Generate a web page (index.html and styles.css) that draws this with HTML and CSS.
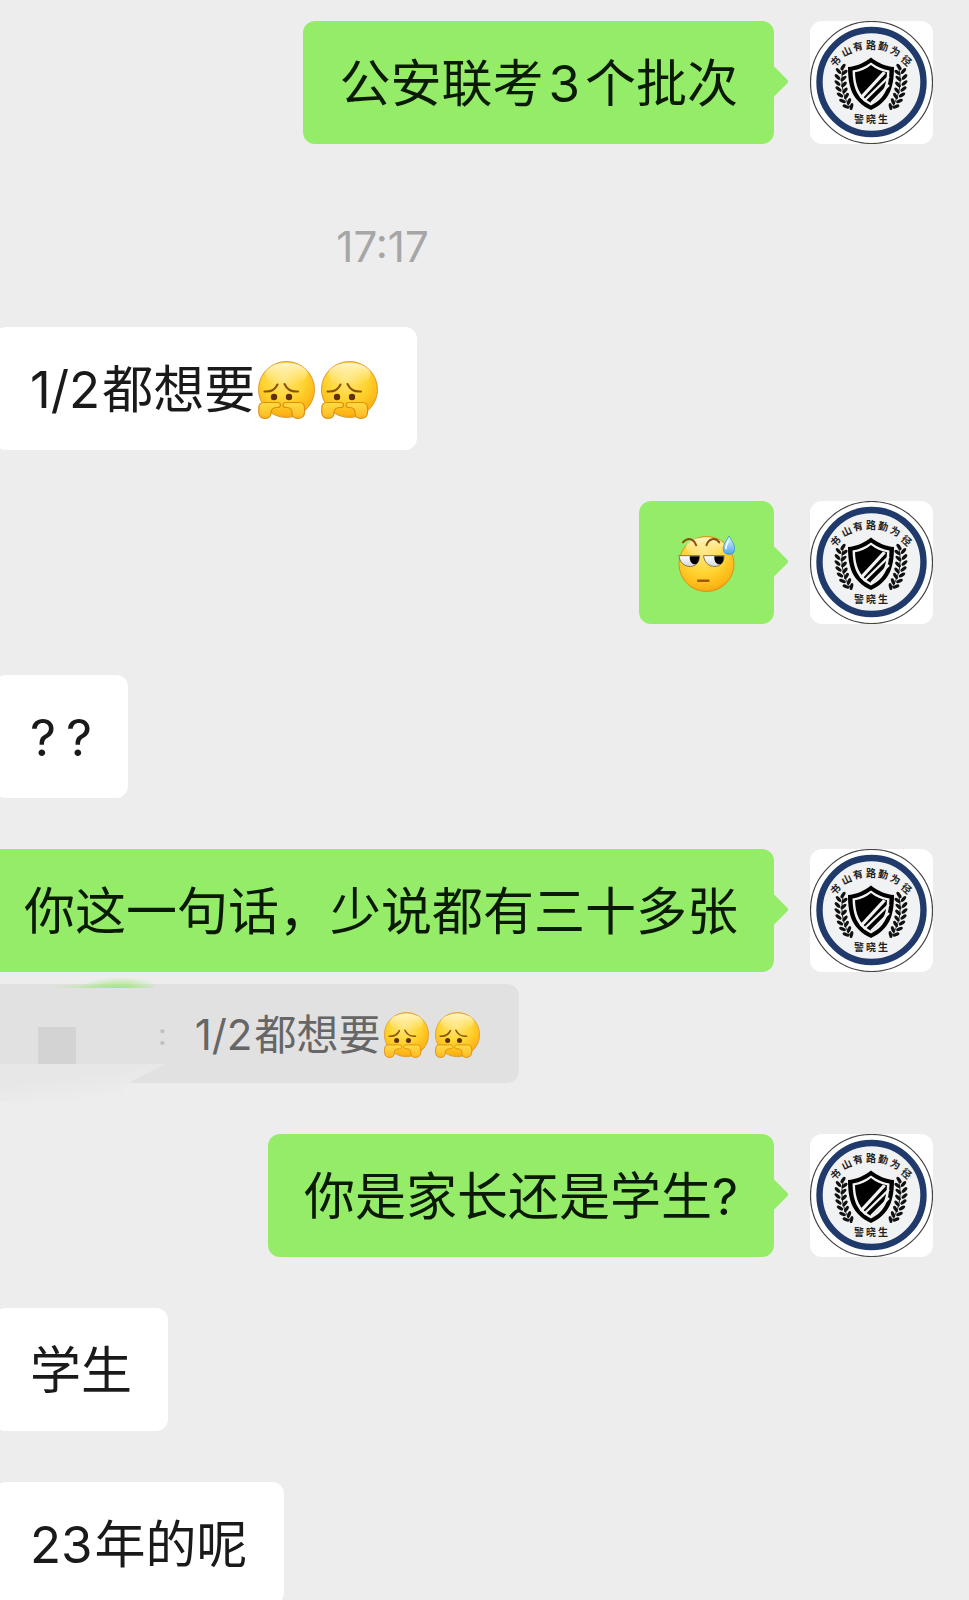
FILE: index.html
```html
<!DOCTYPE html>
<html lang="zh-CN">
<head>
<meta charset="utf-8">
<meta name="viewport" content="width=device-width, initial-scale=1">
<title>聊天</title>
<link rel="stylesheet" href="styles.css">
</head>
<body>
<svg class="defs" aria-hidden="true">
  <defs>
    <radialGradient id="skin" cx="0.45" cy="0.3" r="0.75">
      <stop offset="0" stop-color="#ffe680"/>
      <stop offset="0.5" stop-color="#ffd430"/>
      <stop offset="0.85" stop-color="#fdb515"/>
      <stop offset="1" stop-color="#ee9410"/>
    </radialGradient>
    <linearGradient id="shine" x1="0" y1="0" x2="0" y2="1">
      <stop offset="0" stop-color="#fff8d8" stop-opacity="0.9"/>
      <stop offset="1" stop-color="#fff0a0" stop-opacity="0"/>
    </linearGradient>
    <linearGradient id="hand" x1="0" y1="0" x2="0" y2="1">
      <stop offset="0" stop-color="#ffdc45"/>
      <stop offset="1" stop-color="#fdb922"/>
    </linearGradient>
    <linearGradient id="drop" x1="0" y1="0" x2="0" y2="1">
      <stop offset="0" stop-color="#e4f6ff"/>
      <stop offset="1" stop-color="#4ba6ea"/>
    </linearGradient>
    <linearGradient id="eye" x1="0" y1="0" x2="0" y2="1">
      <stop offset="0" stop-color="#ffffff"/>
      <stop offset="1" stop-color="#d4d8dc"/>
    </linearGradient>

    <symbol id="sad" viewBox="0 0 57 58">
      <circle cx="28.5" cy="28.5" r="28" fill="url(#skin)" stroke="#dc9a2c" stroke-width="1"/>
      <ellipse cx="28.5" cy="13" rx="21" ry="11" fill="url(#shine)"/>
      <g fill="none" stroke="#8a5208" stroke-width="2" stroke-linecap="round">
        <path d="M6.500 30.500C12 31 17 29 19.500 23.500"/>
        <path d="M26.500 23C29 28.500 34 31 40 30.500"/>
      </g>
      <circle cx="16" cy="36" r="3.200" fill="#5f3009"/>
      <circle cx="31" cy="36" r="3.200" fill="#5f3009"/>
      <g fill="url(#hand)" stroke="#dd8f13" stroke-width="1.200" stroke-linejoin="round">
        <path d="M6 41.500H19.500C23.500 41.500 23.500 46.500 19.500 46.500C15 46.500 13 48 13 51.500C13 55.500 11 57.400 7.500 57.400C3.500 57.400 .8 55.500 .8 51.500V47C.8 43 2.500 41.500 6 41.500Z"/>
        <path d="M41 41.500H28C24 41.500 24 46.500 28 46.500C32.500 46.500 34 48 34 51.500C34 55.500 36.500 57.400 39.500 57.400C43.500 57.400 46.500 55.500 46.500 51.500V47C46.500 43 44.500 41.500 41 41.500Z"/>
      </g>
    </symbol>

    <symbol id="sweat" viewBox="0 0 58 58">
      <circle cx="29" cy="29" r="28" fill="url(#skin)" stroke="#d99018" stroke-width="1"/>
      <ellipse cx="28" cy="12" rx="20" ry="10" fill="url(#shine)"/>
      <g fill="none" stroke="#8a4f0a" stroke-width="2" stroke-linecap="round">
        <path d="M5 7C10 1.500 16 3 18.500 10"/>
        <path d="M29 10C31 3 38 1.500 42 7"/>
      </g>
      <path d="M1 20.500H22C22 27 18 31.500 12.500 31.500C6 31.500 1.500 27 1 20.500Z" fill="url(#eye)" stroke="#8b7040" stroke-width="1"/>
      <path d="M26 20.500H47C47 27 43 31.500 37.500 31.500C31 31.500 26.500 27 26 20.500Z" fill="url(#eye)" stroke="#8b7040" stroke-width="1"/>
      <path d="M12 21H21.500C21.500 26 20 29.300 17 29.300C14 29.300 11.500 26 12 21Z"/>
      <path d="M37 21H46.500C46.500 26 45 29.300 42 29.300C39 29.300 36.500 26 37 21Z"/>
      <path d="M20.500 46H31" stroke="#9a5a0a" stroke-width="2.400" stroke-linecap="round"/>
      <path d="M52 .5C49.500 5 46 9 46 13.500C46 17 48.500 19.300 52 19.300C55.500 19.300 57.700 17 57.700 13.500C57.700 9 54.500 5 52 .5Z" fill="url(#drop)" stroke="#3d93cf" stroke-width=".8"/>
      <path d="M51 6C49.500 9 48.500 11 48.800 13.500" fill="none" stroke="#fff" stroke-width="1.600" stroke-linecap="round"/>
    </symbol>

    <symbol id="laurel" viewBox="0 0 20 50" overflow="visible">
      <path d="M7 3C4 18 7 32 16 44" fill="none" stroke="#222" stroke-width="1"/>
      <g fill="#111">
        <ellipse rx="3.600" ry="1.700" transform="translate(7 1) rotate(-55)"/>
        <ellipse rx="3.600" ry="1.700" transform="translate(2.500 5) rotate(50)"/>
        <ellipse rx="3.600" ry="1.700" transform="translate(8.500 6.500) rotate(-40)"/>
        <ellipse rx="3.600" ry="1.700" transform="translate(1.500 11) rotate(46)"/>
        <ellipse rx="3.600" ry="1.700" transform="translate(7.500 12.500) rotate(-42)"/>
        <ellipse rx="3.600" ry="1.700" transform="translate(1.500 17) rotate(42)"/>
        <ellipse rx="3.600" ry="1.700" transform="translate(8 18.500) rotate(-46)"/>
        <ellipse rx="3.600" ry="1.700" transform="translate(2.500 23) rotate(38)"/>
        <ellipse rx="3.600" ry="1.700" transform="translate(9 24.500) rotate(-52)"/>
        <ellipse rx="3.600" ry="1.700" transform="translate(4 29) rotate(32)"/>
        <ellipse rx="3.600" ry="1.700" transform="translate(10.500 30) rotate(-60)"/>
        <ellipse rx="3.600" ry="1.700" transform="translate(6.500 35) rotate(26)"/>
        <ellipse rx="3.600" ry="1.700" transform="translate(13 35.500) rotate(-68)"/>
        <ellipse rx="3.600" ry="1.700" transform="translate(10 40.500) rotate(20)"/>
        <ellipse rx="3.600" ry="1.700" transform="translate(15.500 40.500) rotate(-78)"/>
      </g>
    </symbol>

    <symbol id="badge" viewBox="0 0 123 123">
      <rect width="123" height="123" fill="#fff"/>
      <circle cx="61.500" cy="61.500" r="61" fill="#fff" stroke="#444" stroke-width="1.200"/>
      <circle cx="61.500" cy="61" r="52" fill="#f1f2f3" stroke="#1f3a6b" stroke-width="6.400"/>
      <g class="badge-text" text-anchor="middle">
        <text transform="translate(26 41) rotate(-42)" y="3">书</text>
        <text transform="translate(37 31) rotate(-26)" y="3">山</text>
        <text transform="translate(48 26) rotate(-12)" y="3">有</text>
        <text transform="translate(61 25)" y="3">路</text>
        <text transform="translate(73 26) rotate(12)" y="3">勤</text>
        <text transform="translate(85 31) rotate(26)" y="3">为</text>
        <text transform="translate(96 40) rotate(42)" y="3">径</text>
        <text x="49" y="102">警</text>
        <text x="61" y="102">晓</text>
        <text x="73" y="102">生</text>
      </g>
      <use href="#laurel" x="26" y="45" width="20" height="50"/>
      <use href="#laurel" x="26" y="45" width="20" height="50" transform="translate(122 0) scale(-1 1)"/>
      <path d="M61 36.500C54 42 46 45.500 38 46C38 66 42 80 61 89C80 80 84 66 84 46C76 45.500 68 42 61 36.500Z"/>
      <path d="M61 41.500C55 46 49 48.500 42.500 49.500C43 66 46.500 77 61 84.500C75.500 77 79 66 79.500 49.500C73 48.500 67 46 61 41.500Z" fill="#f1f2f3"/>
      <path d="M61 44C56 48 51 50.200 45 51.200C45.500 65 49 74.500 61 82C73 74.500 76.500 65 77 51.200C71 50.200 66 48 61 44Z"/>
      <path d="M49.500 76L73 50.500L76 52L52 78Z" fill="#f1f2f3"/>
      <g fill="none" stroke="#f1f2f3" stroke-width="2.400">
        <path d="M54 80L79 55.500"/>
        <path d="M61 82L79 64"/>
      </g>
    </symbol>
  </defs>
</svg>

<main class="chat">
  <div class="row mine">
    <p class="bubble">公安联考<span class="num">3</span>个批次</p>
    <svg class="avatar" role="img" aria-label="头像"><use href="#badge"/></svg>
  </div>

  <time class="time">17:17</time>

  <div class="row">
    <p class="bubble"><span class="num-start">1/2</span>都想要<svg class="emoji"><use href="#sad"/></svg><svg class="emoji"><use href="#sad"/></svg></p>
  </div>

  <div class="row mine">
    <p class="bubble"><svg class="emoji"><use href="#sweat"/></svg></p>
    <svg class="avatar" role="img" aria-label="头像"><use href="#badge"/></svg>
  </div>

  <div class="row">
    <p class="bubble marks"><span>?</span><span>?</span></p>
  </div>

  <div class="group">
    <div class="row mine">
      <p class="bubble">你这一句话，少说都有三十多张</p>
      <svg class="avatar" role="img" aria-label="头像"><use href="#badge"/></svg>
    </div>
    <blockquote class="quote">
      <span class="glow"></span>
      <span class="smear"></span>
      <span class="block"></span>
      <span class="colon">:</span>
      <p class="quote-text"><span class="num-start">1/2</span>都想要<svg class="emoji"><use href="#sad"/></svg><svg class="emoji"><use href="#sad"/></svg></p>
    </blockquote>
  </div>

  <div class="row mine">
    <p class="bubble">你是家长还是学生?</p>
    <svg class="avatar" role="img" aria-label="头像"><use href="#badge"/></svg>
  </div>

  <div class="row">
    <p class="bubble">学生</p>
  </div>

  <div class="row">
    <p class="bubble"><span class="num-start">23</span>年的呢</p>
  </div>
</main>
</body>
</html>
```

FILE: styles.css
```css
* {
  box-sizing: border-box;
}

body {
  margin: 0;
  background: #ededed;
  color: #1a1a1a;
  font-family: Inter, "Noto Sans CJK SC", sans-serif;
}

p,
blockquote {
  margin: 0;
}

.defs {
  position: absolute;
  width: 0;
  height: 0;
}

.chat {
  display: flex;
  flex-direction: column;
  gap: 51px;
  height: 100vh;
  padding: 21px 36px 0 0;
  overflow: hidden;
}

.chat > * {
  flex-shrink: 0;
}

.row {
  display: flex;
  align-items: flex-start;
}

.row.mine {
  justify-content: flex-end;
  gap: 36px;
}

.bubble {
  position: relative;
  flex-shrink: 0;
  margin-left: -6px;
  padding: 31px 36px 29px;
  border-radius: 12px;
  background: #fff;
  font-size: 51px;
  line-height: 63px;
  white-space: nowrap;
}

.mine .bubble {
  margin-left: 0;
  background: #95ec69;
  color: #0b1a05;
}

.mine .bubble::after {
  content: "";
  position: absolute;
  top: 48px;
  right: -10px;
  width: 25px;
  height: 25px;
  border-radius: 3px;
  background: #95ec69;
  transform: rotate(45deg);
}

.marks {
  display: flex;
  gap: 10px;
}

.num {
  margin: 0 5px;
}

.num-start {
  margin-right: 2px;
}

.avatar {
  flex-shrink: 0;
  width: 123px;
  height: 123px;
  border-radius: 12px;
}

.badge-text {
  font-family: "Noto Sans CJK SC", sans-serif;
  font-size: 10px;
  font-weight: 700;
  fill: #222;
}

.emoji {
  width: 57px;
  height: 58px;
  margin: 0 3px;
  vertical-align: middle;
}

.bubble .emoji {
  margin-top: -16px;
  margin-bottom: -8px;
}

.time {
  padding: 22px 18% 0 0;
  color: #a6a6a6;
  font-size: 42px;
  line-height: 59px;
  text-align: center;
}

.quote {
  position: relative;
  display: flex;
  align-items: center;
  width: fit-content;
  height: 99px;
  margin-top: 12px;
  padding: 2px 36px 0 38px;
  border-radius: 0 12px 12px 0;
  background: #e1e1e1;
  color: #666;
  font-size: 42px;
  line-height: 51px;
  white-space: nowrap;
}

.glow {
  position: absolute;
  top: -8px;
  left: 45px;
  width: 110px;
  height: 12px;
  background: radial-gradient(ellipse 40px 11px at 75px 12px, #a4e880, transparent),
    radial-gradient(ellipse 55px 5px at 55px 12px, #b9e6a2, transparent);
}

.smear {
  position: absolute;
  top: 80px;
  left: 0;
  width: 165px;
  height: 38px;
  background: linear-gradient(172deg, #e7e7e7 35%, #ededed 80%);
  clip-path: polygon(0 0, 100% 0, 80% 45%, 70% 100%, 0 100%);
}

.block {
  width: 38px;
  height: 38px;
  margin-top: 22px;
  background: #d3d3d3;
}

.colon {
  margin-left: 82px;
  color: #c0c0c0;
  font-size: 30px;
}

.quote-text {
  margin-left: 28px;
}

.quote .emoji {
  width: 45px;
  height: 46px;
  margin-top: -8px;
}
```
